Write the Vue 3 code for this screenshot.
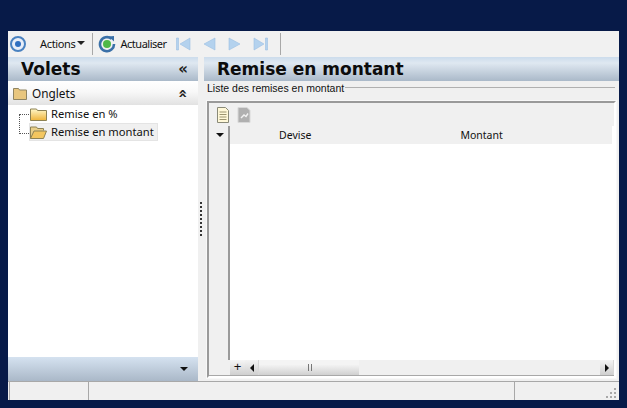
<script setup>
const statusCells = [79, 426]
</script>

<template>
  <div class="page">
    <div class="window">
      <div class="toolbar">
        <svg class="ic-target" viewBox="0 0 18 18" width="18" height="18">
          <circle cx="9" cy="9" r="7" fill="#e8eef8" stroke="#4a82c0" stroke-width="2" />
          <circle cx="9" cy="9" r="3" fill="#2f6fc0" />
        </svg>
        <span class="tool-btn actions">Actions<i class="caret"></i></span>
        <span class="tool-sep"></span>
        <svg class="ic-refresh" viewBox="0 0 18 18" width="18" height="18">
          <circle cx="9" cy="9" r="4" fill="#4fb848" />
          <path d="M13.5 3.8A7 7 0 1 0 16 9" fill="none" stroke="#3a70a8" stroke-width="2.6" />
          <path d="M10.5 1.5 16 1v5.5z" fill="#3a70a8" />
        </svg>
        <span class="tool-btn refresh">Actualiser</span>
        <svg class="nav first" viewBox="0 0 16 16" width="16" height="16">
          <path d="M1.5 2h2v12h-2zM15 2v12L5 8z" fill="#b4d2ee" stroke="#9cc0e2" stroke-width=".6" />
        </svg>
        <svg class="nav prev" viewBox="0 0 16 16" width="16" height="16">
          <path d="M14 2v12L3 8z" fill="#b4d2ee" stroke="#9cc0e2" stroke-width=".6" />
        </svg>
        <svg class="nav next" viewBox="0 0 16 16" width="16" height="16">
          <path d="M2 2v12l11-6z" fill="#b4d2ee" stroke="#9cc0e2" stroke-width=".6" />
        </svg>
        <svg class="nav last" viewBox="0 0 16 16" width="16" height="16">
          <path d="M1 2v12l10-6zM12.500 2h2v12h-2z" fill="#b4d2ee" stroke="#9cc0e2" stroke-width=".6" />
        </svg>
        <span class="tool-sep end"></span>
      </div>

      <div class="body">
        <aside class="left">
          <div class="head left-head">
            <span class="title">Volets</span>
            <span class="chev">«</span>
          </div>
          <div class="group-row">
            <svg viewBox="0 0 14 13" width="14" height="13">
              <path d="M.5 12.500V1.500h5l1 1.500h7v9.500z" fill="#e8c67e" stroke="#8f8462" />
            </svg>
            <span class="group-label">Onglets</span>
            <span class="chev up">«</span>
          </div>
          <div class="tree">
            <span class="tree-lines"></span>
            <div class="node">
              <svg viewBox="0 0 17 13" width="17" height="13">
                <defs>
                  <linearGradient id="fold" x1="0" x2="0" y1="0" y2="1">
                    <stop offset="0" stop-color="#fff7c8" />
                    <stop offset="1" stop-color="#efb43a" />
                  </linearGradient>
                </defs>
                <path d="M.5 12.500V1h6l1 1.500h9v10z" fill="url(#fold)" stroke="#8d8254" />
              </svg>
              <span class="node-text">Remise en %</span>
            </div>
            <div class="node selected">
              <svg viewBox="0 0 17 13" width="17" height="13">
                <path d="M.5 12.500V1h6l1 1.500h6v2" fill="#e8cf8a" stroke="#8d8254" />
                <path d="M.5 12.500 4 5h12.500l-3 7.500z" fill="#f3c65f" stroke="#8d8254" />
              </svg>
              <span class="node-text">Remise en montant</span>
            </div>
          </div>
          <div class="left-foot"><i class="caret dark"></i></div>
        </aside>

        <div class="splitter"><span class="grip"></span></div>

        <main class="right">
          <div class="head right-head">
            <span class="title">Remise en montant</span>
          </div>
          <div class="legend">
            <span>Liste des remises en montant</span>
            <span class="legend-line"></span>
          </div>
          <div class="grid-box">
            <div class="grid-tools">
              <svg viewBox="0 0 14 16" width="14" height="16">
                <path d="M1.500 .5h8l3 3v12h-11z" fill="#fff8d8" stroke="#8a8a78" />
                <path d="M3.500 5h7M3.500 7.500h7M3.500 10h7M3.500 12.500h7" stroke="#9c9470" />
              </svg>
              <svg viewBox="0 0 14 16" width="14" height="16">
                <path d="M1 .5h9l3 3v12H1z" fill="#b0b0b0" stroke="#d8d8d8" />
                <path d="M4 11l3-3 2 1.500 2-3" fill="none" stroke="#f2f2f2" stroke-width="1.400" />
              </svg>
            </div>
            <div class="grid-main">
              <div class="indicator">
                <i class="caret dark ind-caret"></i>
              </div>
              <div class="grid-data">
                <div class="col-head">
                  <span class="col devise">Devise</span>
                  <span class="col montant">Montant</span>
                </div>
                <div class="rows"></div>
              </div>
            </div>
            <div class="scroll-row">
              <span class="plus">+</span>
              <span class="arrow-btn"><i class="tri left-tri"></i></span>
              <div class="track">
                <div class="thumb"><span class="thumb-grip"></span></div>
              </div>
              <span class="arrow-btn"><i class="tri right-tri"></i></span>
            </div>
          </div>
        </main>
      </div>

      <div class="status">
        <span v-for="w in statusCells" :key="w" class="cell" :style="{ width: w + 'px' }"></span>
        <span class="size-grip">
          <svg viewBox="0 0 12 11" width="12" height="11">
            <path d="M9 0h2v2H9zM5 4h2v2H5zM9 4h2v2H9zM1 8h2v2H1zM5 8h2v2H5zM9 8h2v2H9z" fill="#a8a8a8" />
          </svg>
        </span>
      </div>
    </div>
  </div>
</template>

<style scoped>
.page {
  width: 627px;
  height: 408px;
  box-sizing: border-box;
  background: #071a48;
  padding: 31px 8px 8px;
  font-family: "Liberation Sans", Arial, sans-serif;
  font-size: 11px;
  color: #111;
}
.window {
  width: 611px;
  height: 369px;
  background: #f0f0f0;
  display: flex;
  flex-direction: column;
  overflow: hidden;
}
.toolbar {
  height: 26px;
  flex: none;
  display: flex;
  align-items: center;
  background: #f1f1f1;
}
.ic-target {
  margin-left: 1px;
}
.tool-btn {
  font-family: "Noto Sans", sans-serif;
  font-size: 11px;
  letter-spacing: -0.34px;
  white-space: nowrap;
  padding-bottom: 2px;
}
.actions {
  margin-left: 13px;
  display: flex;
  align-items: center;
}
.caret {
  display: inline-block;
  width: 0;
  height: 0;
  border-left: 4px solid transparent;
  border-right: 4px solid transparent;
  border-top: 4px solid #222;
  margin-left: 2px;
}
.caret.dark {
  border-top-color: #111;
}
.tool-sep {
  width: 1px;
  height: 22px;
  background: #a8a8a8;
  margin-left: 7px;
}
.ic-refresh {
  margin-left: 5px;
}
.refresh {
  margin-left: 4px;
  letter-spacing: -0.48px;
}
.nav {
  flex: none;
}
.first {
  margin-left: 8px;
}
.prev {
  margin-left: 10px;
}
.next {
  margin-left: 10px;
}
.last {
  margin-left: 10px;
}
.tool-sep.end {
  margin-left: 11px;
}
.body {
  flex: 1;
  min-height: 0;
  display: flex;
}
.left {
  width: 190px;
  flex: none;
  background: #fff;
  display: flex;
  flex-direction: column;
}
.head {
  height: 24px;
  flex: none;
  display: flex;
  align-items: center;
  background: linear-gradient(#ccdcec, #dfe8f1 25%, #aab9c9);
}
.title {
  font-family: "DejaVu Sans", Verdana, sans-serif;
  font-weight: 700;
  font-size: 17px;
  color: #0c0c0c;
  white-space: nowrap;
}
.left-head {
  padding-left: 13px;
  justify-content: space-between;
  padding-right: 10px;
}
.chev {
  font-family: "DejaVu Sans", sans-serif;
  font-size: 15px;
  font-weight: 700;
  line-height: 1;
  color: #222;
}
.chev.up {
  display: block;
  transform: rotate(90deg);
}
.group-row {
  height: 24px;
  flex: none;
  display: flex;
  align-items: center;
  padding-left: 5px;
  padding-right: 10px;
  background: linear-gradient(#fff, #f8f8f8 45%, #e2e2e2);
}
.group-label {
  flex: 1;
  margin-left: 5px;
  font-family: "Noto Sans", sans-serif;
  font-size: 11.800px;
}
.tree {
  flex: 1;
  position: relative;
}
.tree-lines {
  position: absolute;
  left: 11px;
  top: 9px;
  width: 9px;
  height: 18px;
  border-left: 1px dotted #555;
  border-top: 1px dotted #555;
  border-bottom: 1px dotted #555;
}
.node {
  height: 18px;
  margin-left: 21px;
  width: fit-content;
  display: flex;
  align-items: center;
  gap: 4px;
  box-sizing: border-box;
  padding: 0 3px 0 1px;
  font-family: "Noto Sans", sans-serif;
  font-size: 11.200px;
  white-space: nowrap;
}
.node-text {
  padding-bottom: 2px;
}
.node.selected {
  background: #f0f0f0;
  border: 1px solid #e4e4e4;
  padding-left: 0;
}
.left-foot {
  height: 24px;
  flex: none;
  display: flex;
  align-items: center;
  justify-content: flex-end;
  padding-right: 10px;
  background: linear-gradient(#d5e2f0, #aab8c8);
}
.splitter {
  width: 6px;
  flex: none;
  display: flex;
  align-items: center;
  justify-content: center;
  background: #f0f0f0;
}
.grip {
  display: block;
  width: 2px;
  height: 34px;
  margin-left: -1px;
  background: repeating-linear-gradient(#333 0 2px, transparent 2px 4px);
}
.right {
  flex: 1;
  min-width: 0;
  display: flex;
  flex-direction: column;
}
.right-head {
  padding-left: 13px;
}
.legend {
  height: 13px;
  flex: none;
  display: flex;
  align-items: center;
  padding-left: 3px;
  font-size: 10.500px;
  white-space: nowrap;
}
.legend-line {
  flex: 1;
  height: 1px;
  margin-left: 1px;
  margin-right: 4px;
  background: #b0b0b0;
}
.grid-box {
  height: 277px;
  margin: 7px 3px 0;
  box-sizing: border-box;
  border: 2px solid #9a9a9a;
  border-right-color: #fff;
  border-bottom-color: #fff;
  background: #f0f0f0;
  display: flex;
  flex-direction: column;
  outline: 1px solid #f8f8f8;
}
.grid-tools {
  height: 23px;
  flex: none;
  display: flex;
  align-items: center;
  gap: 7px;
  padding-left: 7px;
  background: #f0f0f0;
}
.grid-main {
  flex: 1;
  min-height: 0;
  display: flex;
}
.indicator {
  width: 21px;
  flex: none;
  box-sizing: border-box;
  border-right: 2px solid #9a9a9a;
  display: flex;
  justify-content: center;
  padding-top: 7px;
  align-items: flex-start;
}
.grid-data {
  flex: 1;
  min-width: 0;
  display: flex;
  flex-direction: column;
  background: #fff;
}
.col-head {
  height: 18px;
  flex: none;
  background: #f0f0f0;
  display: flex;
  align-items: center;
  font-family: "Noto Sans", sans-serif;
  font-size: 10.500px;
  margin-right: 2px;
}
.devise {
  margin-left: 49px;
}
.montant {
  margin-left: 149px;
}
.rows {
  flex: 1;
  background: #fff;
}
.scroll-row {
  height: 15px;
  flex: none;
  display: flex;
  align-items: stretch;
  background: #f0f0f0;
  border-bottom: 1px solid #a8a8a8;
}
.plus {
  width: 15px;
  margin-left: 21px;
  flex: none;
  text-align: center;
  font-size: 13px;
  line-height: 14px;
  background: linear-gradient(#f6f6f6, #cfcfcf);
}
.arrow-btn {
  width: 13px;
  flex: none;
  display: flex;
  align-items: center;
  justify-content: center;
  background: linear-gradient(#f4f4f4, #cfcfcf);
  border-right: 1px solid #d8d8d8;
}
.tri {
  width: 0;
  height: 0;
  border-top: 4px solid transparent;
  border-bottom: 4px solid transparent;
}
.left-tri {
  border-right: 4px solid #111;
}
.right-tri {
  border-left: 4px solid #111;
}
.track {
  flex: 1;
  min-width: 0;
  background: #f0f0f0;
}
.thumb {
  width: 100px;
  height: 100%;
  display: flex;
  align-items: center;
  justify-content: center;
  background: linear-gradient(#f4f4f4 30%, #d0d0d0);
}
.thumb-grip {
  width: 6px;
  height: 7px;
  margin-left: 4px;
  background: repeating-linear-gradient(90deg, #777 0 1px, transparent 1px 3px);
}
.status {
  height: 19px;
  flex: none;
  display: flex;
  background: #f0f0f0;
  border-top: 1px solid #a8a8a8;
  box-sizing: border-box;
  padding-left: 1px;
}
.cell {
  flex: none;
  box-sizing: border-box;
  border-left: 1px solid #a8a8a8;
}
.size-grip {
  flex: 1;
  display: flex;
  justify-content: flex-end;
  align-items: flex-end;
  padding: 0 2px 1px 0;
  border-left: 1px solid #a8a8a8;
}
</style>
